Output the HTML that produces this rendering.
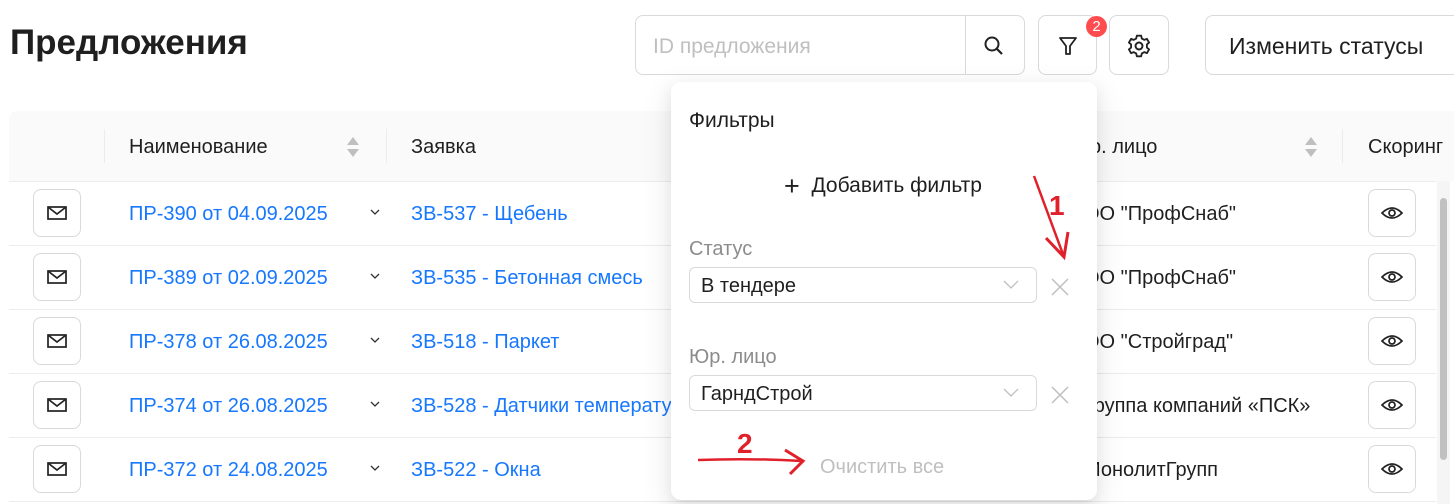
<!DOCTYPE html>
<html><head><meta charset="utf-8"><style>
*{box-sizing:border-box;margin:0;padding:0}
body{width:1454px;height:504px;overflow:hidden;background:#fff;font-family:"Liberation Sans","DejaVu Sans",sans-serif;color:#1f1f1f;position:relative}
.a{position:absolute;white-space:nowrap}
.btn{position:absolute;border:1px solid #d9d9d9;border-radius:8px;background:#fff}
.link{color:#1677ff;font-size:20px}
.t{font-size:20px}
.row{position:absolute;left:9px;width:1427px;height:1px;background:#ececec}
</style></head><body>
<div class="a" style="left:10px;top:23px;font-size:35px;font-weight:bold">Предложения</div>

<div class="btn" style="left:635px;top:15px;width:390px;height:60px"></div>
<div class="a" style="left:965px;top:16px;width:1px;height:58px;background:#d9d9d9"></div>
<div class="a" style="left:653px;top:35px;font-size:21px;color:#bfbfbf">ID предложения</div>
<svg class="a" style="left:983px;top:35px" width="22" height="22" viewBox="0 0 22 22"><circle cx="9" cy="9" r="6.5" fill="none" stroke="#222" stroke-width="2"/><path d="M14 14l5 5" stroke="#222" stroke-width="2.2"/></svg>
<div class="btn" style="left:1038px;top:15px;width:59px;height:60px"></div>
<svg class="a" style="left:1056px;top:34px" width="24" height="24" viewBox="0 0 24 24"><path d="M4 4h16l-6 8v8h-4v-8z" fill="none" stroke="#222" stroke-width="1.8" stroke-linejoin="round"/></svg>
<div class="a" style="left:1086px;top:16px;width:21px;height:21px;border-radius:50%;background:#ff4d4f;color:#fff;font-size:15px;text-align:center;line-height:21px">2</div>
<div class="btn" style="left:1109px;top:15px;width:60px;height:60px"></div>
<svg class="a" style="left:1126px;top:33px" width="26" height="26" viewBox="0 0 24 24"><circle cx="12" cy="12" r="3.2" fill="none" stroke="#222" stroke-width="1.8"/><path d="M10 2.5h4l.6 2.6 2.2 1.2 2.5-.9 2 3.4-2 1.8v2.8l2 1.8-2 3.4-2.5-.9-2.2 1.2-.6 2.6h-4l-.6-2.6-2.2-1.2-2.5.9-2-3.4 2-1.8v-2.8l-2-1.8 2-3.4 2.5.9 2.2-1.2z" fill="none" stroke="#222" stroke-width="1.7" stroke-linejoin="round"/></svg>
<div class="btn" style="left:1205px;top:15px;width:255px;height:60px"></div>
<div class="a" style="left:1229px;top:33px;font-size:23px">Изменить статусы</div>

<div class="a" style="left:9px;top:111px;width:1445px;height:70px;background:#fafafa;border-radius:8px 0 0 0"></div>
<div class="a" style="left:104px;top:129px;width:1px;height:34px;background:#ececec"></div>
<div class="a" style="left:386px;top:129px;width:1px;height:34px;background:#ececec"></div>
<div class="a" style="left:1342px;top:129px;width:1px;height:34px;background:#ececec"></div>
<div class="a t" style="left:129px;top:136px">Наименование</div>
<svg class="a" style="left:346px;top:136px" width="14" height="22"><path d="M7 1l6 8H1z M7 21l6-8H1z" fill="#bfbfbf"/></svg>
<div class="a t" style="left:411px;top:136px">Заявка</div>
<div class="a t" style="left:1090px;top:136px">р. лицо</div>
<svg class="a" style="left:1304px;top:136px" width="14" height="22"><path d="M7 1l6 8H1z M7 21l6-8H1z" fill="#bfbfbf"/></svg>
<div class="a t" style="left:1368px;top:136px">Скоринг</div>
<div class="row" style="top:181px"></div>

<div class="a" style="left:1437px;top:181px;width:13px;height:323px;background:#f5f5f5"></div>
<div class="a" style="left:1440px;top:198px;width:7px;height:262px;background:#c1c1c1;border-radius:4px"></div>

<div class="btn" style="left:33px;top:189px;width:48px;height:48px"></div>
<div class="btn" style="left:33px;top:253px;width:48px;height:48px"></div>
<div class="btn" style="left:33px;top:317px;width:48px;height:48px"></div>
<div class="btn" style="left:33px;top:381px;width:48px;height:48px"></div>
<div class="btn" style="left:33px;top:445px;width:48px;height:48px"></div>
<svg class="a" style="left:47px;top:205px" width="20" height="16"><rect x="1" y="2" width="18" height="12" fill="none" stroke="#222" stroke-width="1.7"/><path d="M1 2l9 7 9-7" fill="none" stroke="#222" stroke-width="1.7"/></svg>
<svg class="a" style="left:47px;top:269px" width="20" height="16"><rect x="1" y="2" width="18" height="12" fill="none" stroke="#222" stroke-width="1.7"/><path d="M1 2l9 7 9-7" fill="none" stroke="#222" stroke-width="1.7"/></svg>
<svg class="a" style="left:47px;top:333px" width="20" height="16"><rect x="1" y="2" width="18" height="12" fill="none" stroke="#222" stroke-width="1.7"/><path d="M1 2l9 7 9-7" fill="none" stroke="#222" stroke-width="1.7"/></svg>
<svg class="a" style="left:47px;top:397px" width="20" height="16"><rect x="1" y="2" width="18" height="12" fill="none" stroke="#222" stroke-width="1.7"/><path d="M1 2l9 7 9-7" fill="none" stroke="#222" stroke-width="1.7"/></svg>
<svg class="a" style="left:47px;top:461px" width="20" height="16"><rect x="1" y="2" width="18" height="12" fill="none" stroke="#222" stroke-width="1.7"/><path d="M1 2l9 7 9-7" fill="none" stroke="#222" stroke-width="1.7"/></svg>

<div class="a link" style="left:129px;top:203px">ПР-390 от 04.09.2025</div>
<div class="a link" style="left:129px;top:267px">ПР-389 от 02.09.2025</div>
<div class="a link" style="left:129px;top:331px">ПР-378 от 26.08.2025</div>
<div class="a link" style="left:129px;top:395px">ПР-374 от 26.08.2025</div>
<div class="a link" style="left:129px;top:459px">ПР-372 от 24.08.2025</div>
<svg class="a" style="left:370px;top:209px" width="10" height="7"><path d="M1 1l4 4 4-4" fill="none" stroke="#333" stroke-width="1.3"/></svg>
<svg class="a" style="left:370px;top:273px" width="10" height="7"><path d="M1 1l4 4 4-4" fill="none" stroke="#333" stroke-width="1.3"/></svg>
<svg class="a" style="left:370px;top:337px" width="10" height="7"><path d="M1 1l4 4 4-4" fill="none" stroke="#333" stroke-width="1.3"/></svg>
<svg class="a" style="left:370px;top:401px" width="10" height="7"><path d="M1 1l4 4 4-4" fill="none" stroke="#333" stroke-width="1.3"/></svg>
<svg class="a" style="left:370px;top:465px" width="10" height="7"><path d="M1 1l4 4 4-4" fill="none" stroke="#333" stroke-width="1.3"/></svg>
<div class="a link" style="left:411px;top:203px">ЗВ-537 - Щебень</div>
<div class="a link" style="left:411px;top:267px">ЗВ-535 - Бетонная смесь</div>
<div class="a link" style="left:411px;top:331px">ЗВ-518 - Паркет</div>
<div class="a link" style="left:411px;top:395px">ЗВ-528 - Датчики температуры</div>
<div class="a link" style="left:411px;top:459px">ЗВ-522 - Окна</div>
<div class="a t" style="left:1084px;top:203px">ОО "ПрофСнаб"</div>
<div class="a t" style="left:1084px;top:267px">ОО "ПрофСнаб"</div>
<div class="a t" style="left:1084px;top:331px">ОО "Стройград"</div>
<div class="a t" style="left:1084px;top:395px">Группа компаний «ПСК»</div>
<div class="a t" style="left:1084px;top:459px">МонолитГрупп</div>
<div class="row" style="top:245px"></div>
<div class="row" style="top:309px"></div>
<div class="row" style="top:373px"></div>
<div class="row" style="top:437px"></div>
<div class="row" style="top:501px"></div>
<div class="btn" style="left:1368px;top:189px;width:48px;height:48px"></div>
<div class="btn" style="left:1368px;top:253px;width:48px;height:48px"></div>
<div class="btn" style="left:1368px;top:317px;width:48px;height:48px"></div>
<div class="btn" style="left:1368px;top:381px;width:48px;height:48px"></div>
<div class="btn" style="left:1368px;top:445px;width:48px;height:48px"></div>
<svg class="a" style="left:1381px;top:205px" width="22" height="16"><path d="M1 8Q11-2 21 8Q11 18 1 8z" fill="none" stroke="#222" stroke-width="1.7"/><circle cx="11" cy="8" r="3" fill="none" stroke="#222" stroke-width="1.7"/></svg>
<svg class="a" style="left:1381px;top:269px" width="22" height="16"><path d="M1 8Q11-2 21 8Q11 18 1 8z" fill="none" stroke="#222" stroke-width="1.7"/><circle cx="11" cy="8" r="3" fill="none" stroke="#222" stroke-width="1.7"/></svg>
<svg class="a" style="left:1381px;top:333px" width="22" height="16"><path d="M1 8Q11-2 21 8Q11 18 1 8z" fill="none" stroke="#222" stroke-width="1.7"/><circle cx="11" cy="8" r="3" fill="none" stroke="#222" stroke-width="1.7"/></svg>
<svg class="a" style="left:1381px;top:397px" width="22" height="16"><path d="M1 8Q11-2 21 8Q11 18 1 8z" fill="none" stroke="#222" stroke-width="1.7"/><circle cx="11" cy="8" r="3" fill="none" stroke="#222" stroke-width="1.7"/></svg>
<svg class="a" style="left:1381px;top:461px" width="22" height="16"><path d="M1 8Q11-2 21 8Q11 18 1 8z" fill="none" stroke="#222" stroke-width="1.7"/><circle cx="11" cy="8" r="3" fill="none" stroke="#222" stroke-width="1.7"/></svg>

<!-- popup -->
<div class="a" style="left:671px;top:82px;width:426px;height:418px;background:#fff;border-radius:10px;box-shadow:0 6px 16px rgba(0,0,0,.08),0 3px 6px -4px rgba(0,0,0,.12),0 9px 28px 8px rgba(0,0,0,.05)"></div>
<div class="a" style="left:689px;top:109px;font-size:21px">Фильтры</div>
<div class="a" style="left:784px;top:174px;font-size:21px"><span style="font-size:27px;line-height:20px;vertical-align:-3px">+</span>&nbsp; Добавить фильтр</div>
<div class="a" style="left:689px;top:238px;font-size:20px;color:#8c8c8c">Статус</div>
<div class="btn" style="left:689px;top:267px;width:348px;height:36px;border-radius:6px"></div>
<div class="a" style="left:701px;top:275px;font-size:20px">В тендере</div>
<svg class="a" style="left:1003px;top:280px" width="16" height="10"><path d="M1 1l7 7 7-7" fill="none" stroke="#bfbfbf" stroke-width="1.3"/></svg>
<svg class="a" style="left:1051px;top:278px" width="18" height="18"><path d="M1 1l16 16M17 1L1 17" stroke="#bfbfbf" stroke-width="1.5"/></svg>
<div class="a" style="left:689px;top:346px;font-size:20px;color:#8c8c8c">Юр. лицо</div>
<div class="btn" style="left:689px;top:375px;width:348px;height:36px;border-radius:6px"></div>
<div class="a" style="left:701px;top:383px;font-size:20px">ГарндСтрой</div>
<svg class="a" style="left:1003px;top:388px" width="16" height="10"><path d="M1 1l7 7 7-7" fill="none" stroke="#bfbfbf" stroke-width="1.3"/></svg>
<svg class="a" style="left:1051px;top:386px" width="18" height="18"><path d="M1 1l16 16M17 1L1 17" stroke="#bfbfbf" stroke-width="1.5"/></svg>
<div class="a" style="left:820px;top:456px;font-size:20px;color:#bfbfbf">Очистить все</div>

<svg class="a" style="left:0;top:0" width="1454" height="504">
<path d="M1034 176L1064 257" stroke="#e0202a" stroke-width="2.5" fill="none"/>
<path d="M1046 238L1064 257L1068 232" stroke="#e0202a" stroke-width="3" fill="none"/>
<path d="M698 460Q750 458 802 461" stroke="#e0202a" stroke-width="2.5" fill="none"/>
<path d="M785 450L803 461L790 474" stroke="#e0202a" stroke-width="3" fill="none"/>
<text x="1049" y="215" fill="#e0202a" font-family="Liberation Sans" font-weight="bold" font-size="28">1</text>
<text x="737" y="453" fill="#e0202a" font-family="Liberation Sans" font-weight="bold" font-size="28">2</text>
</svg>
</body></html>
